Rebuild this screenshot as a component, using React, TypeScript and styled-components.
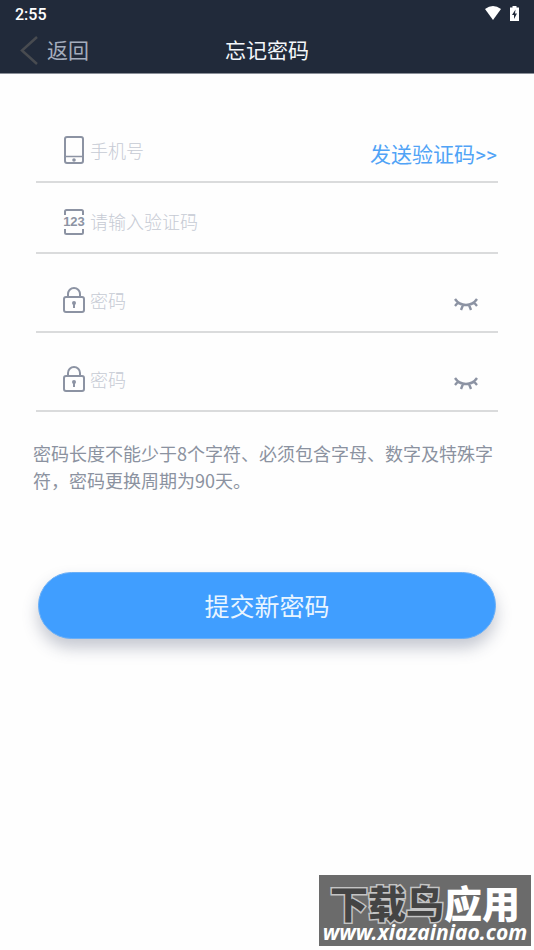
import React, { useState } from "react";
import styled, { createGlobalStyle } from "styled-components";

const GlobalStyle = createGlobalStyle`
  * { box-sizing: border-box; }
  body {
    margin: 0;
    background: #fefefe;
    font-family: Roboto, "Noto Sans CJK SC", sans-serif;
  }
  button, input { font: inherit; }
`;

const Page = styled.div`
  min-height: 100vh;
  position: relative;
`;

const StatusBar = styled.div`
  display: flex;
  align-items: center;
  justify-content: space-between;
  height: 28px;
  padding: 0 15px;
  background: #212a3a;
  color: #fff;
  font-size: 16px;
  font-weight: 500;
`;

const StatusIcons = styled.div`
  display: flex;
  align-items: center;
  gap: 8px;
  height: 26px;
  align-self: flex-start;
`;

const NavBar = styled.header`
  display: grid;
  grid-template-columns: 1fr auto 1fr;
  align-items: center;
  height: 46px;
  padding: 0 20px;
  background: #212a3a;
  border-bottom: 1px solid #8a8f98;
`;

const BackButton = styled.button`
  display: flex;
  align-items: center;
  gap: 8px;
  justify-self: start;
  padding: 0;
  border: 0;
  background: none;
  color: #a4adbd;
  font-size: 21px;
  line-height: 30px;
`;

const Title = styled.h1`
  margin: 0;
  color: #f4f7fb;
  font-size: 21px;
  font-weight: 400;
  line-height: 30px;
`;

const Form = styled.form`
  padding: 46px 36px 0;
`;

const Field = styled.div<{ $height: number }>`
  display: flex;
  align-items: flex-end;
  height: ${(p) => p.$height}px;
  padding: 0 0 16px 27px;
  border-bottom: 2px solid #dadbdc;
`;

const IconLabel = styled.label`
  display: flex;
  flex: none;
  margin-right: 5px;
`;

const Input = styled.input`
  flex: 1;
  min-width: 0;
  height: 26px;
  padding: 0;
  border: 0;
  outline: 0;
  background: none;
  color: #7f8797;
  font-size: 18px;
  font-weight: 300;
  line-height: 26px;
  &::placeholder { color: #c6cad4; opacity: 1; }
`;

const CodeButton = styled.button`
  flex: none;
  padding: 0 1px 0 0;
  border: 0;
  background: none;
  color: #50a3f6;
  font-size: 21px;
  line-height: 20px;
`;

const EyeButton = styled.button`
  display: flex;
  flex: none;
  margin-right: 20px;
  padding: 0 0 3px;
  border: 0;
  background: none;
`;

const Hint = styled.p`
  margin: 28px -6px 0 -3px;
  color: #8b92a0;
  font-family: "Noto Sans CJK SC", sans-serif;
  font-size: 18px;
  line-height: 27px;
`;

const SubmitButton = styled.button`
  display: block;
  width: calc(100% - 4px);
  height: 67px;
  margin: 78px 2px 0;
  padding: 0 0 1px;
  border: 1px solid #6aaff7;
  border-radius: 34px;
  background: #409eff;
  box-shadow: 0 9px 16px rgba(50, 60, 95, 0.28);
  color: #e9f5ff;
  font-size: 25px;
`;

const Watermark = styled.aside`
  position: absolute;
  right: 3px;
  bottom: 4px;
  display: flex;
  flex-direction: column;
  align-items: center;
  width: 212px;
  height: 71px;
  padding-top: 9px;
  background: #6b6b6b;
  color: #fff;
  white-space: nowrap;
`;

const MarkName = styled.div`
  font-family: "Noto Sans CJK SC", sans-serif;
  font-size: 38px;
  font-weight: 900;
  line-height: 36px;
`;

const MarkDark = styled.span`
  color: #444;
  -webkit-text-stroke: 3px #c4c4c4;
  paint-order: stroke fill;
`;

const MarkUrl = styled.div`
  font-family: "Noto Sans", sans-serif;
  font-size: 21px;
  font-style: italic;
  font-weight: 700;
  line-height: 24px;
`;

const stroke = { fill: "none", stroke: "#8c93a3", strokeWidth: 2 } as const;

const PhoneIcon = () => (
  <svg width="22" height="30" viewBox="0 0 22 30" {...stroke}>
    <rect x="2" y="2" width="18" height="26" rx="2" />
    <path d="M2 21.500h18" strokeWidth="1.5" />
    <circle cx="11" cy="25" r="1.8" fill="#8c93a3" stroke="none" />
  </svg>
);

const CodeIcon = () => (
  <svg width="22" height="28" viewBox="0 0 22 28" {...stroke}>
    <path d="M2 7V3.500Q2 2 3.500 2H18.500Q20 2 20 3.500V7M2 21V24.500Q2 26 3.500 26H18.500Q20 26 20 24.500V21" />
    <text x="11" y="18" textAnchor="middle" fill="#8c93a3" stroke="none" fontFamily="Liberation Sans, sans-serif" fontSize="13" fontWeight="700">
      123
    </text>
  </svg>
);

const LockIcon = () => (
  <svg width="22" height="28" viewBox="0 0 22 28" {...stroke}>
    <rect x="1" y="10" width="20" height="15" rx="2" />
    <path d="M5 10V7a6 6 0 0 1 12 0V10" />
    <path d="M11 16v5" />
    <circle cx="11" cy="16" r="2" fill="#8c93a3" stroke="none" />
  </svg>
);

const EyeClosedIcon = () => (
  <svg width="24" height="14" viewBox="0 0 24 14" {...stroke} strokeWidth={2.4}>
    <path d="M1 1Q5 7 12 7T23 1M4 4.500L1 8M20 4.500l3 3.500M9 7L7 12M15 7l2 5" />
  </svg>
);

function PasswordField({ id, label, height }: { id: string; label: string; height: number }) {
  const [shown, setShown] = useState(false);
  return (
    <Field $height={height}>
      <IconLabel htmlFor={id} aria-label={label}><LockIcon /></IconLabel>
      <Input id={id} type={shown ? "text" : "password"} placeholder="密码" />
      <EyeButton type="button" aria-label="显示密码" aria-pressed={shown} onClick={() => setShown(!shown)}>
        <EyeClosedIcon />
      </EyeButton>
    </Field>
  );
}

export default function App() {
  return (
    <Page>
      <GlobalStyle />
      <StatusBar>
        <span>2:55</span>
        <StatusIcons>
          <svg width="18" height="14" viewBox="0 0 18 14" fill="#fff">
            <path d="M1 3Q9-3 17 3L9 14Z" />
          </svg>
          <svg width="9" height="15" viewBox="0 0 9 15">
            <path d="M2.500 0h4v1.500H9V15H0V1.500h2.500Z" fill="#fff" />
            <path d="M5.500 3.500L2 9h2v4l3-5.500H5Z" fill="#212a3a" />
          </svg>
        </StatusIcons>
      </StatusBar>
      <NavBar>
        <BackButton type="button">
          <svg width="19" height="30" viewBox="0 0 19 30" fill="none" stroke="#484b50" strokeWidth="2.5">
            <path d="M17 1L2 14.500L17 28" />
          </svg>
          返回
        </BackButton>
        <Title>忘记密码</Title>
      </NavBar>
      <Form onSubmit={(e) => e.preventDefault()}>
        <Field $height={63}>
          <IconLabel htmlFor="phone" aria-label="手机号"><PhoneIcon /></IconLabel>
          <Input id="phone" type="tel" placeholder="手机号" />
          <CodeButton type="button">发送验证码&gt;&gt;</CodeButton>
        </Field>
        <Field $height={71}>
          <IconLabel htmlFor="code" aria-label="验证码"><CodeIcon /></IconLabel>
          <Input id="code" type="text" placeholder="请输入验证码" />
        </Field>
        <PasswordField id="password" label="密码" height={79} />
        <PasswordField id="confirm" label="确认密码" height={79} />
        <Hint>密码长度不能少于8个字符、必须包含字母、数字及特殊字符，密码更换周期为90天。</Hint>
        <SubmitButton type="submit">提交新密码</SubmitButton>
      </Form>
      <Watermark>
        <MarkName><MarkDark>下载鸟</MarkDark>应用</MarkName>
        <MarkUrl>www.xiazainiao.com</MarkUrl>
      </Watermark>
    </Page>
  );
}
